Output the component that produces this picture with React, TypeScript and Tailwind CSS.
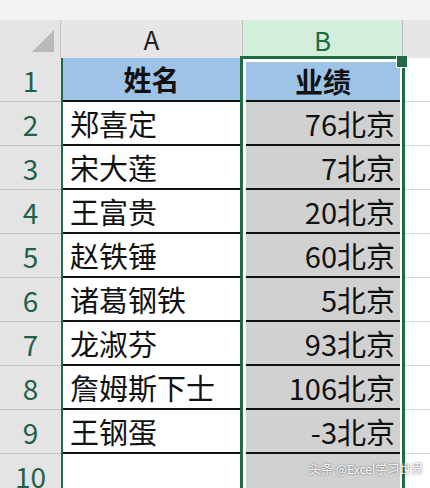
import React from "react";

const names = ["郑喜定", "宋大莲", "王富贵", "赵铁锤", "诸葛钢铁", "龙淑芬", "詹姆斯下士", "王钢蛋", ""];
const scores = ["76北京", "7北京", "20北京", "60北京", "5北京", "93北京", "106北京", "-3北京", ""];
const rowNums = [1, 2, 3, 4, 5, 6, 7, 8, 9, 10];

export default function App() {
  return (
    <div className="relative w-[430px] h-[488px] overflow-hidden bg-white font-['Noto_Sans_CJK_SC',sans-serif] text-[#111]">
      <div className="h-[20px] bg-[#f2f2f2]" />
      <div className="flex">
        {/* row headers */}
        <div className="w-[61px] flex flex-col bg-[#e4e4e4]">
          <div className="h-[38px] border-r border-[#c8c8c8] flex items-end justify-end pr-[6px] pb-[6px]">
            <svg width="22" height="22" viewBox="0 0 22 22">
              <polygon points="22,0 22,22 0,22" fill="#b9b9b9" />
            </svg>
          </div>
          {rowNums.map((n) => (
            <div
              key={n}
              className="h-[44px] shrink-0 border-b border-[#c6c6c6] flex items-center justify-center text-[28px] leading-none text-[#1f6146]"
            >
              {n}
            </div>
          ))}
        </div>

        {/* green edge of row headers */}
        <div className="w-[2px] flex flex-col">
          <div className="h-[38px] bg-[#e4e4e4]" />
          <div className="h-[460px] bg-[#1e6b44]" />
        </div>

        {/* column A */}
        <div className="w-[177px] flex flex-col">
          <div className="h-[38px] bg-[#e6e6e6] flex items-center justify-center text-[26px] leading-none text-[#222]">
            A
          </div>
          <div className="h-[44px] shrink-0 bg-[#9dc3e6] border-b-2 border-[#111] flex items-center justify-center text-[28px] font-bold leading-none">
            姓名
          </div>
          {names.map((n, i) => (
            <div
              key={i}
              className="h-[44px] shrink-0 border-b-2 border-[#111] flex items-center pl-[7px] text-[29px] leading-none"
            >
              {n}
            </div>
          ))}
        </div>

        {/* column B (selected) */}
        <div className="w-[165px] flex flex-col">
          <div className="h-[36px] bg-[#e6e6e6] flex">
            <div className="flex-1 mx-[2px] bg-[#d3efdc] border-x border-[#bdbdbd] flex items-center justify-center pt-[3px] text-[26px] leading-none text-[#1e6b44]">
              B
            </div>
          </div>
          <div className="h-[460px] border-[3px] border-b-0 border-[#1e6b44] bg-white pl-[3px] pr-[2px] pt-[3px] flex flex-col">
            <div className="h-[40px] shrink-0 bg-[#9dc3e6] border-b-2 border-[#111] flex items-center justify-center text-[28px] font-bold leading-none">
              业绩
            </div>
            {scores.map((s, i) => (
              <div
                key={i}
                className="h-[44px] shrink-0 bg-[#d1d1d1] border-b-2 border-[#111] flex items-center justify-end pr-[5px] text-[29px] leading-none"
              >
                {s}
              </div>
            ))}
          </div>
        </div>

        {/* column C */}
        <div className="flex-1 flex flex-col">
          <div className="h-[38px] bg-[#e6e6e6]" />
          {rowNums.map((n) => (
            <div key={n} className="h-[44px] shrink-0 border-b border-[#d6d6d6]" />
          ))}
        </div>
      </div>

      {/* fill handle */}
      <div className="absolute left-[396px] top-[56px] w-[11px] h-[12px] bg-[#1e6b44] border-l border-b border-white" />

      {/* watermark */}
      <div className="absolute left-[309px] top-[463px] text-[12px] leading-none text-white [text-shadow:0_0_2px_rgba(0,0,0,0.7)]">
        头条 @Excel学习世界
      </div>
    </div>
  );
}
